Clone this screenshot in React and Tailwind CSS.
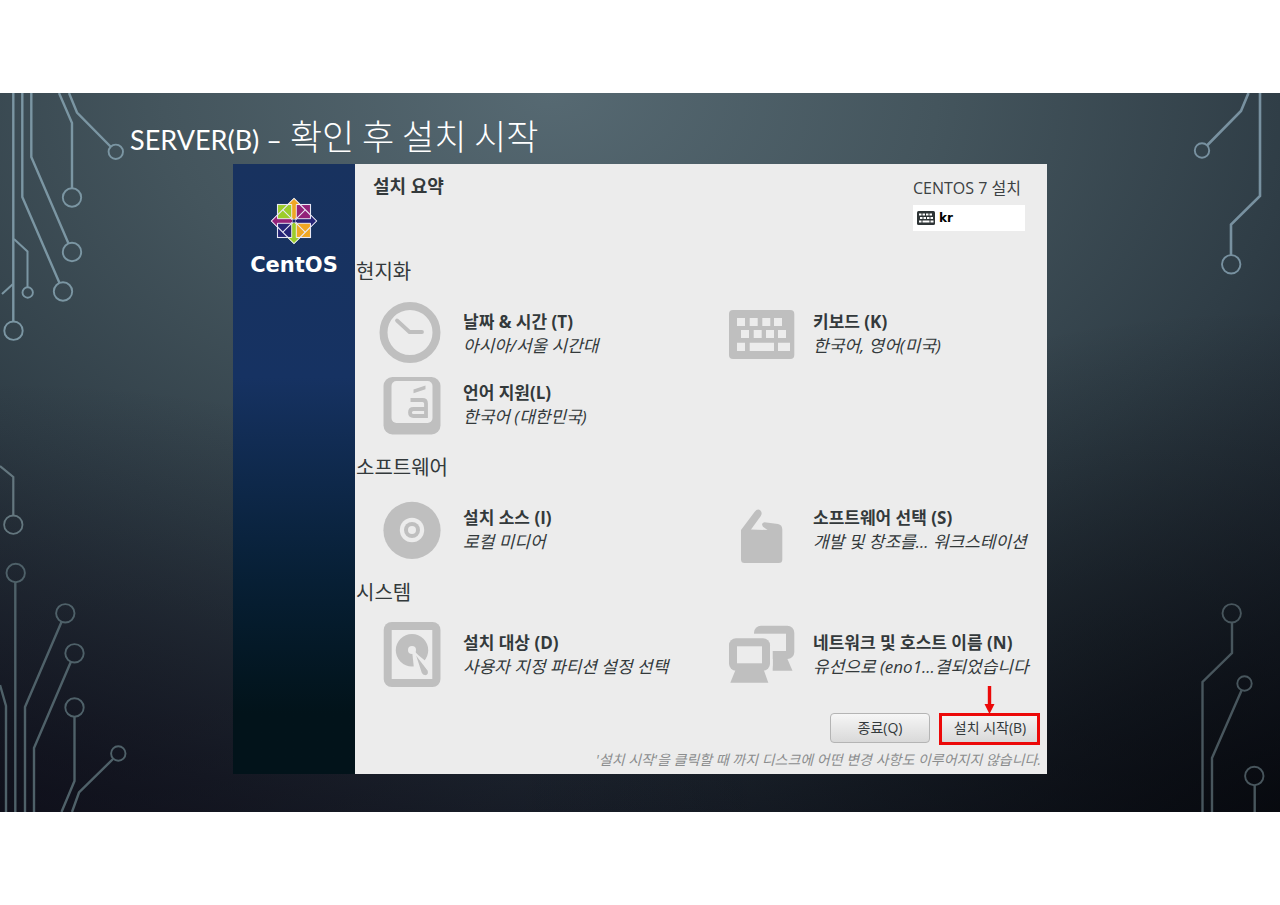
import React from 'react';

function LeftTraces() {
  return (
    <svg
      className="pointer-events-none absolute left-0 top-0 h-[719px] w-[130px]"
      viewBox="0 0 130 719"
      fill="none"
      aria-hidden="true"
    >
      <g stroke="#7b96a3" strokeWidth="2.4">
        <path d="M13.3 0V228" />
        <path d="M22.3 0V104L59.5 190" />
        <path d="M31.3 0V64L68.5 150.5" />
        <path d="M59 0L72 30V95" />
        <path d="M69 0L77 19.5L110.5 53.5" />
        <path d="M14 146L27.5 158.5V194" strokeWidth="2" />
        <path d="M13 191L2 201" strokeWidth="2" />
        <g strokeWidth="1.9">
          <circle cx="13.5" cy="237.7" r="9.2" />
          <circle cx="63" cy="198.5" r="9.2" />
          <circle cx="72" cy="159" r="9.2" />
          <circle cx="72" cy="104.5" r="9.2" />
          <circle cx="115.8" cy="58.8" r="7.2" />
          <circle cx="27.7" cy="199.5" r="5.2" />
        </g>
      </g>
      <g stroke="#64777f" strokeWidth="2.2">
        <path d="M0 373L13.3 384V422.5" />
        <circle cx="13.3" cy="431.7" r="9.2" strokeWidth="1.8" />
      </g>
      <g stroke="#4f6169" strokeWidth="2.4">
        <path d="M15.3 489.5V719" />
        <path d="M61.5 529L25 614V719" />
        <path d="M70.8 569L34 655V719" />
        <path d="M74.5 624V688L61.5 719" />
        <path d="M113 666L79 699.5L72 719" />
        <path d="M0 592L6 613V719" />
        <g strokeWidth="1.9">
          <circle cx="15.7" cy="480" r="9.2" />
          <circle cx="65.3" cy="520.3" r="9.2" />
          <circle cx="74.5" cy="560.3" r="9.2" />
          <circle cx="74.5" cy="614.5" r="9.2" />
          <circle cx="118.3" cy="660.5" r="7.2" />
        </g>
      </g>
    </svg>
  );
}

function RightTraces() {
  return (
    <svg
      className="pointer-events-none absolute right-0 top-0 h-[719px] w-[130px]"
      viewBox="0 0 130 719"
      fill="none"
      aria-hidden="true"
    >
      <g stroke="#7891a0" strokeWidth="2.6">
        <path d="M98.5 0L91 18L57 52.5" />
        <path d="M110 0V103L81 131.5V162" />
        <circle cx="52" cy="57.5" r="7.2" strokeWidth="1.9" />
        <circle cx="81.2" cy="171.3" r="9.2" strokeWidth="1.9" />
      </g>
      <g stroke="#48565d" strokeWidth="2.4">
        <path d="M82 529.5V560L52.5 589V719" />
        <path d="M91.5 597.5L62 665V719" />
        <path d="M104.7 692V719" />
        <circle cx="81.7" cy="520.3" r="9.2" strokeWidth="1.9" />
        <circle cx="94.5" cy="590.5" r="7.2" strokeWidth="1.9" />
        <circle cx="104.3" cy="683" r="9.2" strokeWidth="1.9" />
      </g>
    </svg>
  );
}

function CentosMark() {
  return (
    <svg className="h-12 w-12" viewBox="-24 -24 48 48" aria-hidden="true">
      <g stroke="#e8e8f4" strokeWidth="1.1">
        <rect x="-16.5" y="-16.5" width="16" height="16" fill="#9ccd2a" />
        <rect x="0.5" y="-16.5" width="16" height="16" fill="#932279" />
        <rect x="-16.5" y="0.5" width="16" height="16" fill="#262577" />
        <rect x="0.5" y="0.5" width="16" height="16" fill="#efa724" />
      </g>
      <g fill="none" stroke="#e8e8f4" strokeWidth="1.1">
        <path d="M0 -22.5L22.5 0L0 22.5L-22.5 0Z" />
        <path d="M-11.2 -11.2L11.2 11.2M11.2 -11.2L-11.2 11.2" />
      </g>
      <g stroke="#f4f4fa" strokeWidth="0.9">
        <path d="M0 -22.5L6 -16.5H2.300V-3L0 -1L-2.300 -3V-16.5H-6Z" fill="#efa724" />
        <path d="M22.5 0L16.5 6V2.300H3L1 0L3 -2.300H16.5V-6Z" fill="#262577" />
        <path d="M0 22.5L6 16.5H2.300V3L0 1L-2.300 3V16.5H-6Z" fill="#9ccd2a" />
        <path d="M-22.5 0L-16.5 6V2.300H-3L-1 0L-3 -2.300H-16.5V-6Z" fill="#932279" />
      </g>
      <rect x="-1.5" y="-1.5" width="3" height="3" fill="#1c2f66" />
    </svg>
  );
}

function Icon({ children }) {
  return (
    <svg className="h-[71px] w-[66px] shrink-0" viewBox="0 0 66 71" fill="#bfbfbf" aria-hidden="true">
      {children}
    </svg>
  );
}

const LIGHT = '#ececec';

const ClockIcon = () => (
  <Icon>
    <circle cx="31" cy="34.5" r="26.5" fill="none" stroke="#bfbfbf" strokeWidth="8" />
    <path
      d="M18 22.5L30.5 34H43"
      fill="none"
      stroke="#bfbfbf"
      strokeWidth="3.8"
      strokeLinecap="round"
      strokeLinejoin="round"
    />
  </Icon>
);

const LanguageIcon = () => (
  <Icon>
    <rect x="4.5" y="8" width="57" height="57.5" rx="9" />
    <rect x="12.5" y="12" width="41" height="42" rx="5" fill={LIGHT} />
    <path
      d="M31.5 31H43.5Q47 31 47 34.5V47H34.5Q31 47 31 43.5Q31 40 34.5 40H47"
      fill="none"
      stroke="#bfbfbf"
      strokeWidth="3.8"
    />
    <path d="M34.5 20.5L46.5 16.5V20.3L34.5 24.3Z" />
  </Icon>
);

const KeyboardIcon = () => (
  <Icon>
    <rect x="0" y="12" width="65.3" height="49" rx="4" />
    <g fill={LIGHT}>
      <path d="M8 20H16V28H8ZM20.7 20H28.7V28H20.7ZM33.3 20H41.3V28H33.3ZM45 20H53V28H45Z" />
      <path d="M12 32H20V40H12ZM24.7 32H32.7V40H24.7ZM37 32H45V40H37ZM49 32H57V40H49Z" />
      <path d="M8 44.7H16V53H8ZM20.7 44.7H45V53H20.7ZM49 44.7H61V53H49Z" />
    </g>
  </Icon>
);

const DiscIcon = () => (
  <Icon>
    <circle cx="33" cy="36.3" r="28.6" />
    <circle cx="33" cy="36" r="12.2" fill={LIGHT} />
    <circle cx="33" cy="36" r="8" />
    <circle cx="33" cy="36" r="4" fill={LIGHT} />
  </Icon>
);

const PackageIcon = () => (
  <Icon>
    <path d="M12 36L25.5 18Q28.5 14.3 31.2 16.3Q33.8 18.6 31.8 22L22 35.5L38.500 36L34 32.8Q31.5 29 35.5 28.3L49 30Q53.3 30.8 53.3 35.5V65.5Q53.3 69 49.8 69H15.5Q12 69 12 65.5Z" />
  </Icon>
);

const DriveIcon = () => (
  <Icon>
    <rect x="4.7" y="3" width="56.8" height="65" rx="8" />
    <rect x="12.7" y="11" width="40.6" height="49" fill={LIGHT} />
    <circle cx="33" cy="31.3" r="16.2" />
    <path d="M33 31L46.500 42L50 50L35 50Z" fill={LIGHT} />
    <circle cx="33" cy="31" r="4" fill={LIGHT} />
    <path
      d="M35 32.5L49.500 51.5Q50.5 56.500 46.500 57Q43 57 42 54Z"
      stroke={LIGHT}
      strokeWidth="1.6"
    />
  </Icon>
);

const NetworkIcon = () => (
  <Icon>
    <rect x="25" y="6.7" width="40.3" height="33.3" rx="7" />
    <rect x="25" y="14.7" width="32" height="17.3" fill={LIGHT} />
    <path d="M43.7 39V51.7H63.5L58 39Z" />
    <rect x="-3" y="16" width="46.7" height="39" rx="9" fill={LIGHT} />
    <rect x="0" y="19.3" width="41" height="32.4" rx="7" />
    <rect x="8" y="27.3" width="25" height="17" fill={LIGHT} />
    <path d="M6.5 51H34.8L39.3 63.7H1.3Z" />
  </Icon>
);

const SECTIONS = [
  {
    title: '현지화',
    items: [
      { Icon: ClockIcon, name: '날짜 & 시간 (T)', status: '아시아/서울 시간대' },
      { Icon: KeyboardIcon, name: '키보드 (K)', status: '한국어, 영어(미국)' },
      { Icon: LanguageIcon, name: '언어 지원(L)', status: '한국어 (대한민국)' },
    ],
  },
  {
    title: '소프트웨어',
    items: [
      { Icon: DiscIcon, name: '설치 소스 (I)', status: '로컬 미디어' },
      { Icon: PackageIcon, name: '소프트웨어 선택 (S)', status: '개발 및 창조를... 워크스테이션' },
    ],
  },
  {
    title: '시스템',
    items: [
      { Icon: DriveIcon, name: '설치 대상 (D)', status: '사용자 지정 파티션 설정 선택' },
      { Icon: NetworkIcon, name: '네트워크 및 호스트 이름 (N)', status: '유선으로 (eno1...결되었습니다' },
    ],
  },
];

function Spoke({ item }) {
  const Glyph = item.Icon;
  return (
    <button type="button" className="flex h-[71px] items-center gap-[18px] whitespace-nowrap pl-6 text-left">
      <Glyph />
      <span className="flex flex-col text-[17px] leading-6 text-[#33393b]">
        <span className="font-bold">{item.name}</span>
        <span className="italic">{item.status}</span>
      </span>
    </button>
  );
}

function Section({ section }) {
  return (
    <section className="flex flex-col gap-[14px] pb-[15px]">
      <h2 className="pl-px text-xl leading-[25px] text-[#33393b]">{section.title}</h2>
      <div className="grid grid-cols-[350fr_342fr]">
        {section.items.map((item) => (
          <Spoke key={item.name} item={item} />
        ))}
      </div>
    </section>
  );
}

const buttonClass =
  'h-[30px] w-[100px] rounded-sm border border-[#b4b4b4] bg-linear-to-b from-[#f6f6f6] to-[#d9d9d9] text-sm text-[#33393b]';

function Installer() {
  return (
    <div className="mx-[233px] flex font-['Open_Sans','Noto_Sans_CJK_KR',sans-serif]">
      <aside className="flex w-[122px] shrink-0 flex-col items-center bg-linear-to-b from-[#18325f] from-0% via-[#163262] via-35% to-[#02131a] to-90% pt-[33px]">
        <CentosMark />
        <span className="mt-1 font-['DejaVu_Sans',sans-serif] text-[21px] font-bold leading-8 text-white">CentOS</span>
      </aside>
      <main className="flex min-w-0 grow flex-col bg-[#ececec]">
        <header className="flex h-[95px] items-start justify-between pl-[18px] pr-[22px] pt-[10px]">
          <h1 className="text-lg font-bold leading-6 text-[#33393b]">설치 요약</h1>
          <div className="flex w-28 flex-col gap-[5px] pt-[2px]">
            <p className="whitespace-nowrap text-base leading-6 text-[#3c4143]">CENTOS 7 설치</p>
            <button
              type="button"
              className="flex h-[26px] items-center gap-1 bg-white px-1 font-['DejaVu_Sans',sans-serif] text-xs font-bold text-black"
            >
              <svg className="h-[14px] w-[18px]" viewBox="0 0 18 14" aria-hidden="true">
                <rect width="18" height="14" rx="1.5" fill="#2e3436" />
                <g fill="#fff">
                  <path d="M2 2.5H4.500V4.500H2ZM5.500 2.5H8V4.500H5.500ZM9 2.5H11.500V4.500H9ZM12.500 2.5H15V4.500H12.500Z" />
                  <path d="M3 6H5.500V8H3ZM6.500 6H9V8H6.500ZM10 6H12.500V8H10ZM13.500 6H16V8H13.500Z" />
                  <path d="M2 9.500H4.500V11.500H2ZM5.500 9.500H12.500V11.500H5.500ZM13.500 9.500H16.500V11.500H13.500Z" />
                </g>
              </svg>
              kr
            </button>
          </div>
        </header>
        {SECTIONS.map((section) => (
          <Section key={section.title} section={section} />
        ))}
        <footer className="flex flex-col items-end gap-[7px] pb-1 pr-[6px] pt-2">
          <div className="flex gap-[10px] pr-px">
            <button type="button" className={buttonClass}>종료(Q)</button>
            <div className="relative">
              <button type="button" className={buttonClass}>설치 시작(B)</button>
              <div className="pointer-events-none absolute -left-px top-0 h-8 w-[101px] border-3 border-[#ec0909]" />
              <svg
                className="pointer-events-none absolute -top-7 left-11 h-[29px] w-[11px]"
                viewBox="0 0 11 29"
                fill="#ec0909"
                aria-hidden="true"
              >
                <path d="M3.800 1H7.200V19H10.500L5.500 29L0.500 19H3.800Z" />
              </svg>
            </div>
          </div>
          <p className="whitespace-nowrap text-sm italic leading-5 text-[#8b8d8e]">
            '설치 시작'을 클릭할 때 까지 디스크에 어떤 변경 사항도 이루어지지 않습니다.
          </p>
        </footer>
      </main>
    </div>
  );
}

export default function App() {
  return (
    <div className="flex min-h-screen flex-col justify-center bg-white">
      <div className="relative overflow-hidden bg-[radial-gradient(ellipse_60%_70%_at_100%_100%,rgba(4,6,10,0.7),rgba(4,6,10,0)),radial-gradient(ellipse_60%_60%_at_0%_100%,rgba(12,10,22,0.6),rgba(12,10,22,0)),radial-gradient(ellipse_108%_125%_at_43%_0%,#566972_0%,#44555d_28%,#2f3d46_54%,#1a212b_80%,#0d0f18_100%)] pb-[38px]">
        <LeftTraces />
        <RightTraces />
        <p className="flex h-[71px] items-baseline gap-2 whitespace-nowrap pl-[130px] pt-[22px] font-['Lato','Noto_Sans_CJK_KR',sans-serif] text-[27px] leading-10 text-white">
          <span>SERVER(B) –</span>
          <span className="font-['Noto_Sans_CJK_KR',sans-serif] text-[35px] font-light leading-10">확인 후 설치 시작</span>
        </p>
        <Installer />
      </div>
    </div>
  );
}
